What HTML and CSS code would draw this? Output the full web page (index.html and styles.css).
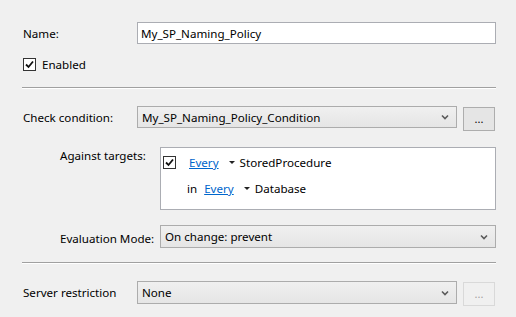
FILE: index.html
```html
<!DOCTYPE html>
<html>
<head>
<meta charset="utf-8">
<link rel="stylesheet" href="styles.css">
</head>
<body>
<div class="page">
  <div class="row name-row">
    <span class="label">Name:</span>
    <div class="textbox">My_SP_Naming_Policy</div>
  </div>
  <div class="check-row">
    <span class="cb"><svg width="9" height="9" viewBox="0 0 9 9"><path d="M1 4.5 L3.5 7 L8 1.5" fill="none" stroke="#111" stroke-width="1.8"/></svg></span>
    <span>Enabled</span>
  </div>
  <div class="sep sep1"></div>
  <div class="row cond-row">
    <span class="label">Check condition:</span>
    <div class="combo"><span>My_SP_Naming_Policy_Condition</span><span class="chev"><svg width="8" height="6" viewBox="0 0 8 6"><path d="M1 1.5 L4 4.5 L7 1.5" fill="none" stroke="#5a5a5a" stroke-width="1.6"/></svg></span></div>
    <div class="btn">...</div>
  </div>
  <div class="indent">
    <div class="targets-row">
      <span class="label2">Against targets:</span>
      <div class="targets">
        <div class="trow">
          <span class="cb cb-small"><svg width="9" height="9" viewBox="0 0 9 9"><path d="M1 4.5 L3.5 7 L8 1.5" fill="none" stroke="#111" stroke-width="1.8"/></svg></span>
          <a class="link">Every</a><span class="tri"></span><span>StoredProcedure</span>
        </div>
        <div class="trow trow2">
          <span class="in">in</span>
          <a class="link">Every</a><span class="tri"></span><span>Database</span>
        </div>
      </div>
    </div>
    <div class="eval-row">
      <span class="label3">Evaluation Mode:</span>
      <div class="combo"><span>On change: prevent</span><span class="chev"><svg width="8" height="6" viewBox="0 0 8 6"><path d="M1 1.5 L4 4.5 L7 1.5" fill="none" stroke="#5a5a5a" stroke-width="1.6"/></svg></span></div>
    </div>
  </div>
  <div class="sep sep2"></div>
  <div class="row server-row">
    <span class="label">Server restriction</span>
    <div class="combo"><span>None</span><span class="chev"><svg width="8" height="6" viewBox="0 0 8 6"><path d="M1 1.5 L4 4.5 L7 1.5" fill="none" stroke="#5a5a5a" stroke-width="1.6"/></svg></span></div>
    <div class="btn disabled">...</div>
  </div>
</div>
</body>
</html>
```
FILE: styles.css
```css
html, body {
  margin: 0;
  padding: 0;
  background: #f0f0f0;
}
body {
  font-family: "Noto Sans", "Open Sans", sans-serif;
  font-size: 11.6px;
  line-height: 15px;
  color: #000;
  width: 516px;
  height: 317px;
  overflow: hidden;
}
.page {
  padding: 22px 0 0 22px;
  width: 474px;
}
.row {
  display: flex;
  align-items: flex-start;
}
.label {
  width: 115px;
  padding-left: 1px;
  padding-top: 4px;
  box-sizing: border-box;
  flex: none;
  white-space: nowrap;
}
.textbox {
  flex: 1;
  height: 22px;
  box-sizing: border-box;
  background: #fff;
  border: 1px solid #abadb3;
  padding-left: 3px;
  display: flex;
  align-items: center;
}
.check-row {
  display: flex;
  align-items: center;
  margin-top: 14px;
  padding-left: 1px;
  height: 13px;
}
.cb {
  width: 13px;
  height: 13px;
  box-sizing: border-box;
  border: 1px solid #333;
  background: #fff;
  display: inline-flex;
  align-items: center;
  justify-content: center;
  margin-right: 6px;
  flex: none;
}
.sep {
  height: 1px;
  background: #a0a0a0;
  border-bottom: 1px solid #fff;
}
.sep1 { margin-top: 16px; }
.cond-row { margin-top: 17px; }
.combo {
  width: 320px;
  height: 22px;
  box-sizing: border-box;
  border: 1px solid #acacac;
  background: linear-gradient(#f0f0f0, #e5e5e5);
  display: flex;
  align-items: center;
  justify-content: space-between;
  padding: 0 7px 0 4px;
  flex: none;
}
.chev {
  display: inline-flex;
  align-items: center;
}
.btn {
  width: 32px;
  height: 24px;
  margin-top: 1px;
  box-sizing: border-box;
  border: 1px solid #adadad;
  background: #e5e5e5;
  margin-left: 6px;
  display: flex;
  align-items: center;
  justify-content: center;
  font-size: 11px;
  padding-bottom: 2px;
  flex: none;
}
.btn.disabled {
  background: #f0f0f0;
  border-color: #d9d9d9;
  color: #a0a0a0;
}
.indent {
  padding-left: 38px;
}
.targets-row {
  display: flex;
  margin-top: 16px;
}
.label2 {
  width: 100px;
  flex: none;
  padding-top: 1px;
  white-space: nowrap;
}
.targets {
  flex: 1;
  height: 63px;
  box-sizing: border-box;
  background: #fff;
  border: 1px solid #abadb3;
  padding: 7px 0 0 2px;
}
.trow {
  display: flex;
  align-items: center;
  height: 15px;
}
.trow2 {
  margin-top: 11px;
  padding-left: 24px;
}
.cb-small {
  margin-right: 13px;
}
.link {
  color: #0066cc;
  text-decoration: underline;
  margin-right: 10px;
}
.in {
  margin-right: 7px;
}
.tri {
  width: 0;
  height: 0;
  border-left: 3px solid transparent;
  border-right: 3px solid transparent;
  border-top: 3px solid #222;
  margin-right: 5px;
}
.eval-row {
  display: flex;
  align-items: center;
  margin-top: 15px;
}
.label3 {
  width: 100px;
  flex: none;
  text-align: right;
  padding-right: 7px;
  padding-top: 3px;
  box-sizing: border-box;
  white-space: nowrap;
}
.eval-row .combo {
  flex: 1;
  width: auto;
  height: 23px;
}
.sep2 { margin-top: 14px; }
.server-row { margin-top: 17px; }
.server-row .combo { height: 23px; }
```
